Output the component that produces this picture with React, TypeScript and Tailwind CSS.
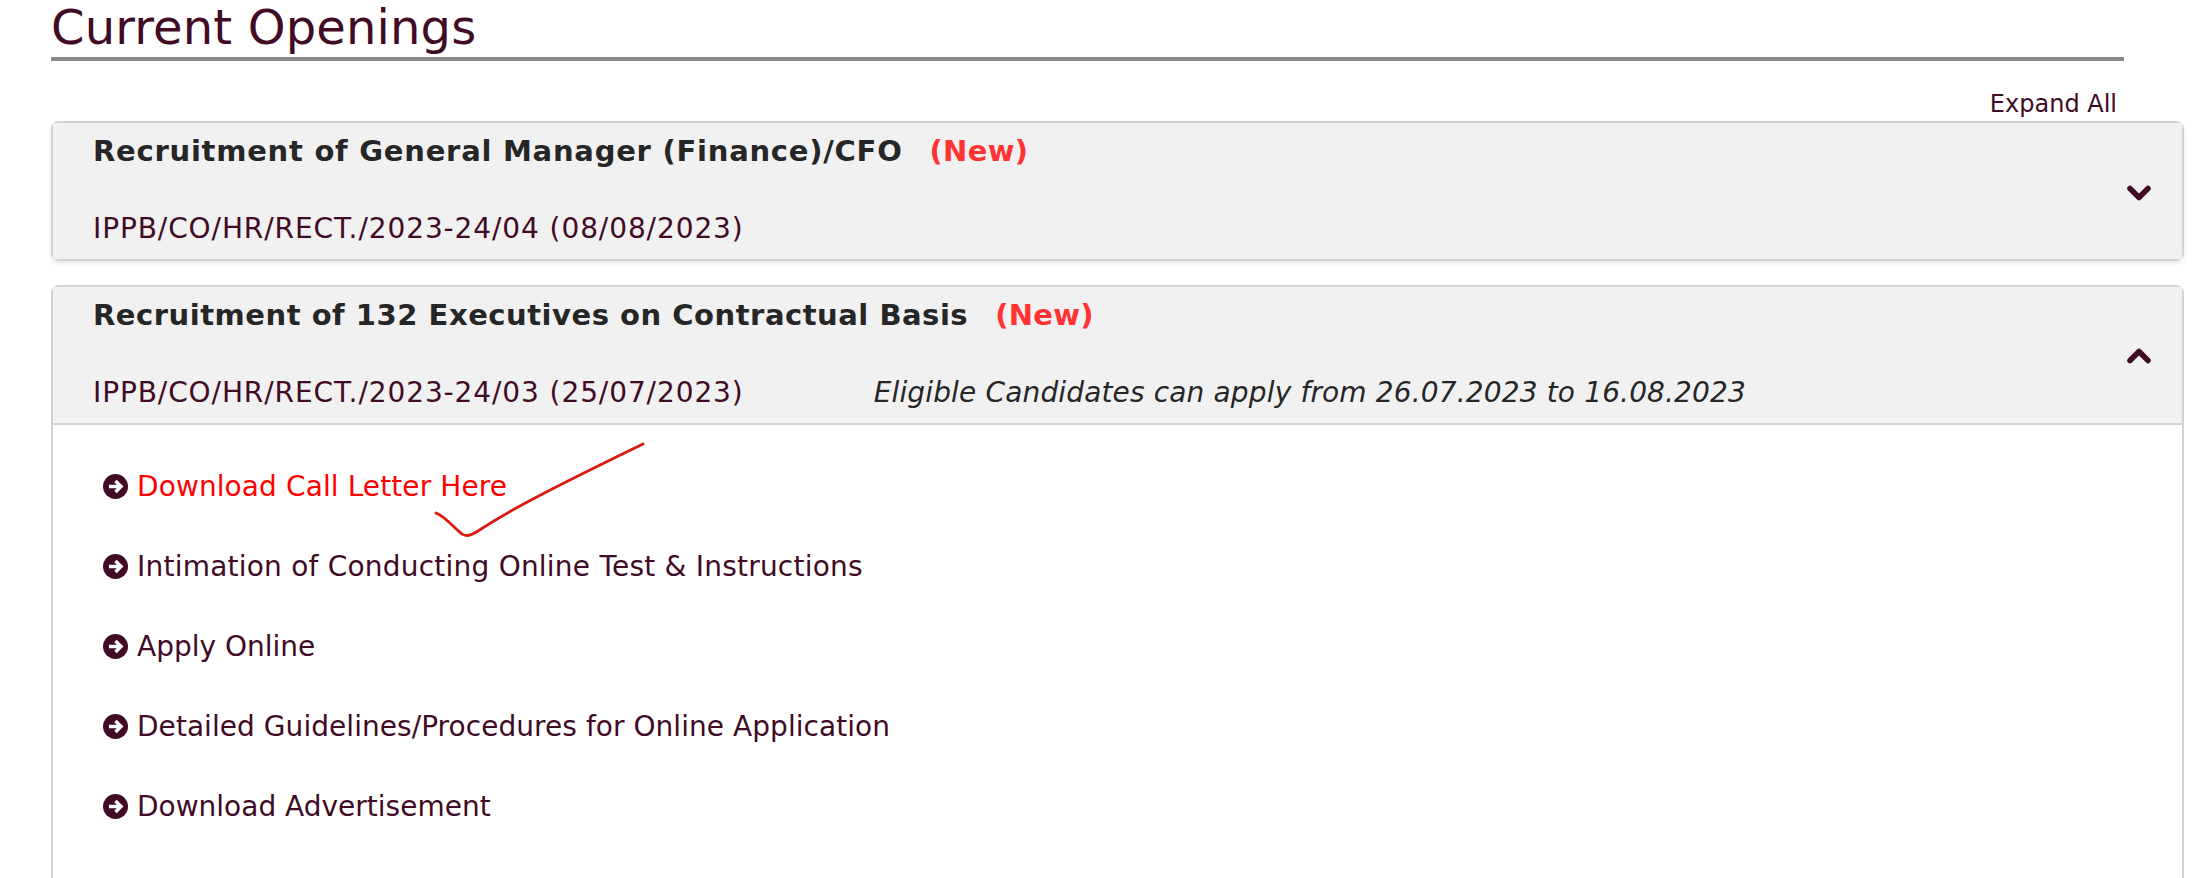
import React from "react";

const rows = [
  { t: "Download Call Letter Here", c: "text-[#ff0000] tracking-[0.1px]" },
  { t: "Intimation of Conducting Online Test & Instructions", c: "tracking-[0.22px]" },
  { t: "Apply Online", c: "" },
  { t: "Detailed Guidelines/Procedures for Online Application", c: "tracking-[0.05px]" },
  { t: "Download Advertisement", c: "" },
];

function Chevron({ up }: { up?: boolean }) {
  return (
    <svg width="24" height="16" viewBox="0 0 24 16" fill="none" className={up ? "-mt-[1px] rotate-180" : ""}>
      <path d="M3 3.5 L12 12.5 L21 3.5" stroke="#410a25" strokeWidth="5.5" strokeLinecap="round" strokeLinejoin="round" />
    </svg>
  );
}

function CircleArrow() {
  return (
    <svg width="25" height="25" viewBox="0 0 25 25" className="mb-[2px] shrink-0">
      <circle cx="12.5" cy="12.5" r="12.5" fill="#410a25" />
      <path d="M6 12.5 H17 M12.5 7 L18 12.5 L12.5 18" fill="none" stroke="#ffffff" strokeWidth="3.4" />
    </svg>
  );
}

function Header({ title, titleC, ref_, note, up }: { title: string; titleC: string; ref_: string; note?: string; up?: boolean }) {
  return (
    <div className="relative h-[136px] bg-[#f1f1f1] px-[40px]">
      <div className="flex h-[55px] items-center text-[29px] leading-[40px] font-bold text-[#262626]">
        <span className={titleC}>{title}</span>
        <span className="ml-[27px] tracking-[0.3px] text-[#ff3333]">(New)</span>
      </div>
      <div className="mt-[31px] flex h-[40px] items-center text-[28px] text-[#410a25]">
        <span className="tracking-[0.9px]">{ref_}</span>
        {note && <span className="ml-[130px] tracking-[0.15px] text-[#262626] italic">{note}</span>}
      </div>
      <div className="absolute top-[62px] right-[31px] flex">
        <Chevron up={up} />
      </div>
    </div>
  );
}

export default function App() {
  return (
    <div className="relative h-[878px] w-[2200px] overflow-hidden bg-white pl-[51px] font-['DejaVu_Sans',sans-serif]">
      <h1 className="h-[61px] w-[2073px] border-b-4 border-[#888888] text-[48px] leading-[54px] font-normal tracking-[0.15px] text-[#410a25]">
        Current Openings
      </h1>
      <div className="flex h-[60px] w-[2066px] items-center justify-end pt-[25px] text-[24px] leading-[32px] text-[#410a25]">
        Expand All
      </div>
      <div className="w-[2133px] rounded-[8px] border-2 border-[#d2d2d2] shadow-[0_2px_4px_rgba(0,0,0,0.1)]">
        <Header titleC="tracking-[0.75px]" title="Recruitment of General Manager (Finance)/CFO" ref_="IPPB/CO/HR/RECT./2023-24/04 (08/08/2023)" />
      </div>
      <div className="mt-[24px] h-[700px] w-[2133px] rounded-t-[8px] border-2 border-[#d2d2d2]">
        <Header
          up
          titleC="tracking-[0.52px]"
          title="Recruitment of 132 Executives on Contractual Basis"
          ref_="IPPB/CO/HR/RECT./2023-24/03 (25/07/2023)"
          note="Eligible Candidates can apply from 26.07.2023 to 16.08.2023"
        />
        <div className="border-t-2 border-[#d2d2d2] pt-[22px] pl-[50px]">
          {rows.map((r) => (
            <div key={r.t} className="flex h-[80px] items-center gap-[9px] text-[28px] leading-[40px] text-[#410a25]">
              <CircleArrow />
              <span className={r.c}>{r.t}</span>
            </div>
          ))}
        </div>
      </div>
      <svg className="absolute top-0 left-0" width="2200" height="878" fill="none">
        <path d="M436 513 C446 517 455 529 462 534 C466 537 472 535 478 531 C505 513 540 494 643 444" stroke="#dd1a10" strokeWidth="2.8" strokeLinecap="round" />
      </svg>
    </div>
  );
}
